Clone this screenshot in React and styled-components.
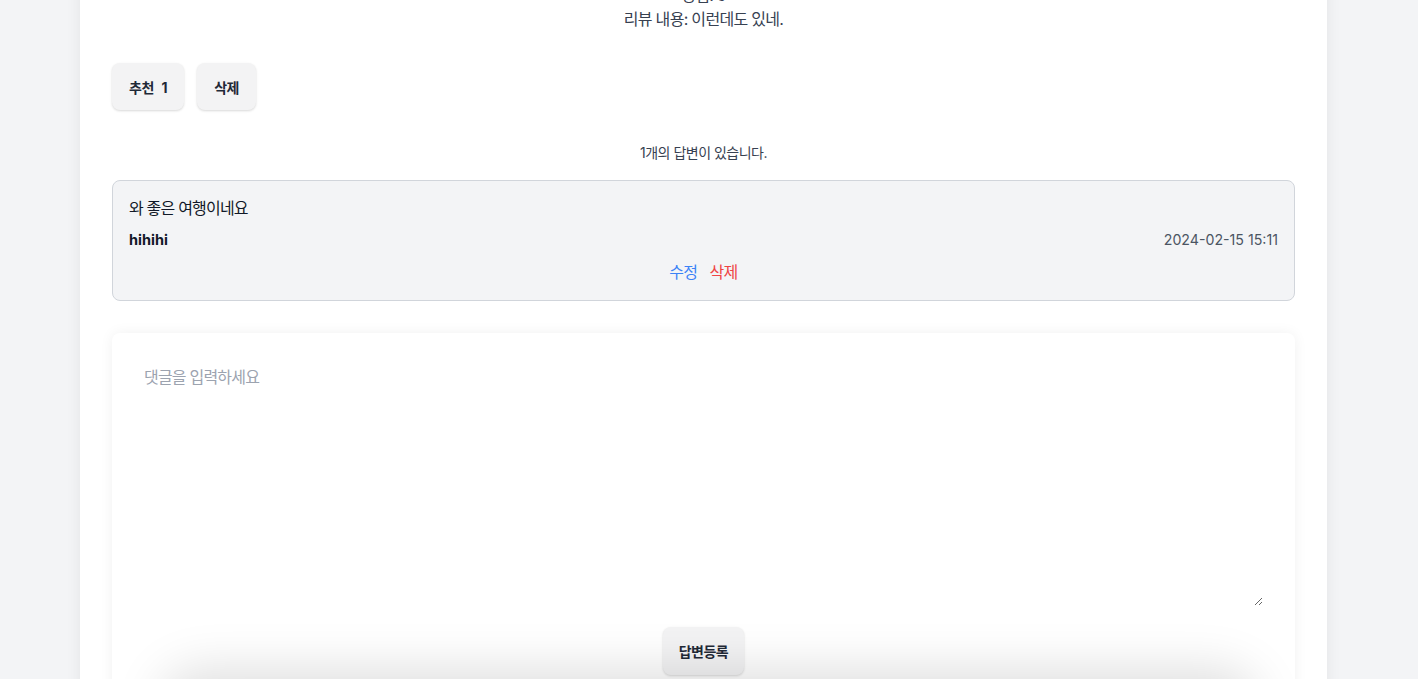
import styled, { createGlobalStyle } from 'styled-components'

const GlobalStyle = createGlobalStyle`
  html, body {
    margin: 0;
    padding: 0;
    background: #f3f4f6;
    font-family: Inter, "Noto Sans CJK KR", "Noto Sans", sans-serif;
    color: #374151;
    overflow: hidden;
  }
  * { box-sizing: border-box; }
`

const Page = styled.div`
  width: 1247px;
  margin-left: 80px;
  min-height: 760px;
  background: #fff;
  box-shadow: 0 0 14px rgba(0, 0, 0, 0.07);
  padding: 0 32px 80px;
`

const ReviewInfo = styled.div`
  margin-top: -17px;
  text-align: center;
  font-size: 16px;
  line-height: 24px;
  letter-spacing: -0.7px;
  color: #374151;
`

const ActionRow = styled.div`
  display: flex;
  gap: 13px;
  margin-top: 32px;
`

const GrayButton = styled.button`
  height: 47px;
  padding: 0 17px;
  border: none;
  border-radius: 8px;
  background: #f3f3f4;
  box-shadow: 0 1px 3px rgba(0, 0, 0, 0.1), 0 1px 2px rgba(0, 0, 0, 0.06);
  font-family: inherit;
  font-size: 14px;
  font-weight: 700;
  letter-spacing: -0.5px;
  word-spacing: 5px;
  color: #1f2937;
  cursor: pointer;
`

const CountText = styled.p`
  margin: 33px 0 0;
  text-align: center;
  font-size: 14px;
  line-height: 20px;
  letter-spacing: -0.5px;
  color: #374151;
`

const ReplyCard = styled.div`
  margin-top: 17px;
  background: #f3f4f6;
  border: 1px solid #d1d5db;
  border-radius: 8px;
  padding: 15px 16px 16px;
  display: flex;
  flex-direction: column;
  gap: 8px;
`

const ReplyBody = styled.p`
  margin: 0;
  font-size: 16px;
  line-height: 24px;
  letter-spacing: -0.8px;
  color: #111827;
`

const MetaRow = styled.div`
  display: flex;
  justify-content: space-between;
  align-items: center;
  font-size: 14px;
  line-height: 24px;
`

const Author = styled.span`
  font-size: 14.5px;
  font-weight: 700;
  color: #111827;
`

const DateText = styled.span`
  font-size: 14.2px;
  color: #4b5563;
`

const LinkRow = styled.div`
  display: flex;
  justify-content: center;
  gap: 12px;
  font-size: 16px;
  line-height: 24px;
  letter-spacing: -0.6px;
`

const TextLink = styled.a`
  color: ${p => (p.$danger ? '#ef4444' : '#3b82f6')};
  cursor: pointer;
`

const FormCard = styled.form`
  margin-top: 32px;
  background: #fff;
  border-radius: 8px;
  box-shadow: 0 0 14px rgba(0, 0, 0, 0.06);
  padding: 32px 32px 40px;
  display: flex;
  flex-direction: column;
  align-items: center;
`

const TextArea = styled.textarea`
  width: 100%;
  height: 241px;
  border: none;
  outline: none;
  padding: 0;
  font-family: inherit;
  font-size: 16px;
  line-height: 24px;
  letter-spacing: -0.8px;
  color: #111827;
  background: transparent;
  &::placeholder { color: #9ca3af; }
`

const SubmitButton = styled(GrayButton)`
  margin-top: 21px;
  height: 48px;
  padding: 0 16px;
`

const BottomShade = styled.div`
  position: fixed;
  left: 170px;
  right: 170px;
  bottom: -60px;
  height: 60px;
  border-radius: 40px;
  box-shadow: 0 0 50px 10px rgba(0, 0, 0, 0.13);
  pointer-events: none;
`

export default function App() {
  return (
    <>
      <GlobalStyle />
      <Page>
        <ReviewInfo>
          <div>평점: 5</div>
          <div>리뷰 내용: 이런데도 있네.</div>
        </ReviewInfo>
        <ActionRow>
          <GrayButton type="button">추천 1</GrayButton>
          <GrayButton type="button">삭제</GrayButton>
        </ActionRow>
        <CountText>1개의 답변이 있습니다.</CountText>
        <ReplyCard>
          <ReplyBody>와 좋은 여행이네요</ReplyBody>
          <MetaRow>
            <Author>hihihi</Author>
            <DateText>2024-02-15 15:11</DateText>
          </MetaRow>
          <LinkRow>
            <TextLink>수정</TextLink>
            <TextLink $danger>삭제</TextLink>
          </LinkRow>
        </ReplyCard>
        <FormCard onSubmit={e => e.preventDefault()}>
          <TextArea placeholder="댓글을 입력하세요" />
          <SubmitButton type="submit">답변등록</SubmitButton>
        </FormCard>
      </Page>
      <BottomShade />
    </>
  )
}
